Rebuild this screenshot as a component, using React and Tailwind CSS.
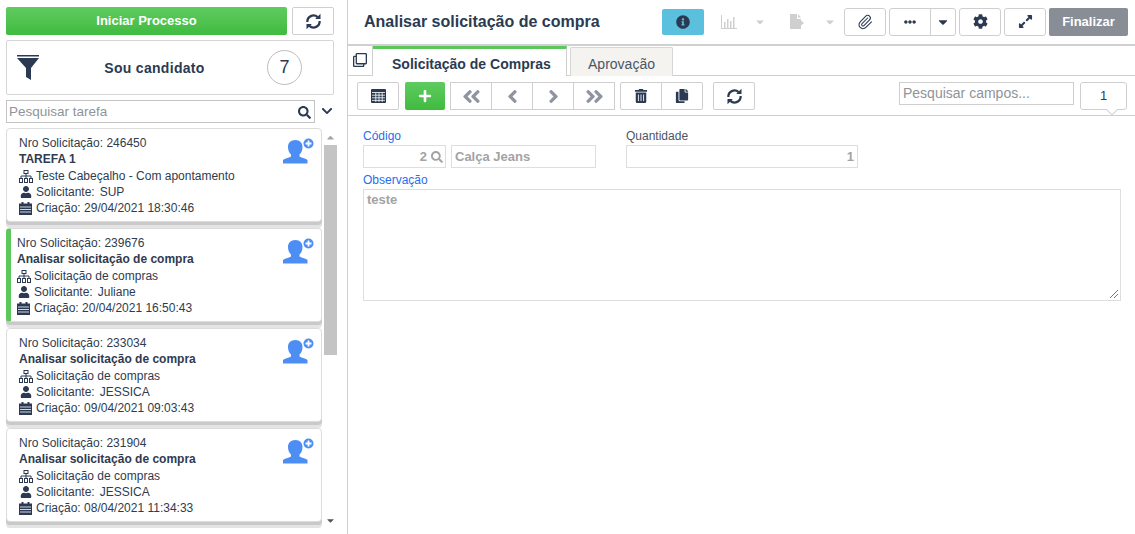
import React from "react";
import { FaSearch, FaChevronDown, FaUser, FaInfoCircle, FaEllipsisH, FaCaretDown, FaCaretUp, FaCog, FaExpandAlt, FaAngleDoubleLeft, FaAngleDoubleRight, FaAngleLeft, FaAngleRight, FaPlus, FaTrashAlt, FaCopy, FaRegClone } from "react-icons/fa";
import { Paperclip } from "lucide-react";

const ink = "#2b3a52";
const Sync = ({ s = 17 }) => (
  <svg width={s} height={s} viewBox="0 0 16 16" fill="none" stroke={ink} strokeWidth="2.1">
    <path d="M2.2 8.5a5.8 5.8 0 0 1 9.7-4.6" />
    <path d="M13.8 7.5a5.8 5.8 0 0 1-9.7 4.6" />
    <path d="M9.6 5.6h5V.8z" fill={ink} stroke="none" />
    <path d="M6.4 10.4h-5v4.8z" fill={ink} stroke="none" />
  </svg>
);
const Funnel = () => (
  <svg width="22" height="25" viewBox="0 0 22 25">
    <path d="M0 0h22v1.5H0z" fill="#2b3a52" />
    <path d="M0 3h22l-8 10v12l-5-3V13z" fill="#2b3a52" />
  </svg>
);
const Tree = () => (
  <svg width="14" height="13" viewBox="0 0 14 13" fill="none" stroke={ink} strokeWidth="1" className="shrink-0">
    <rect x="5" y="0.5" width="4" height="3" />
    <path d="M7 3.5V6M2 8V6h10v2M7 6v2" />
    <rect x="0.5" y="8.5" width="3" height="4" />
    <rect x="5.5" y="8.5" width="3" height="4" />
    <rect x="10.5" y="8.5" width="3" height="4" />
  </svg>
);
const Cal = () => (
  <svg width="13" height="13" viewBox="0 0 13 13" className="shrink-0">
    <path d="M0 1.5h13V13H0z" fill={ink} />
    <path d="M2.5 0h2v2h-2zM8.5 0h2v2h-2z" fill={ink} />
    <path d="M1 5h11M1 7.5h11M1 10h11" stroke="#fff" strokeWidth="0.8" />
  </svg>
);
const UserAdd = () => (
  <svg width="31" height="26" viewBox="0 0 31 26" className="absolute right-[7px] top-[9px]">
    <path d="M12.500 2c4.500 0 7 3 7 7 0 3-1 5.500-3 7.500v2c2.500 1.500 6.500 2 8 3.500v3.500H0V22c1.500-1.500 5.500-2 8-3.500v-2c-2-2-3-4.500-3-7.500 0-4 2.500-7 7.500-7z" fill="#4d8ef5" />
    <circle cx="25.500" cy="5.500" r="5" fill="#4d8ef5" />
    <path d="M22.500 5.500h6M25.500 2.500v6" stroke="#fff" strokeWidth="1.800" />
  </svg>
);
const Chart = () => (
  <svg width="16" height="14" viewBox="0 0 16 14" fill="#cfcfcf" className="shrink-0">
    <path d="M0 0h1v13h15v1H0z" />
    <path d="M3 7h1.500v6H3zM6 4h1.500v9H6zM9 6h1.500v7H9zM12 2h1.500v11H12z" />
  </svg>
);
const FileOut = () => (
  <svg width="14" height="15" viewBox="0 0 14 15" fill="#cfcfcf" className="shrink-0">
    <path d="M0 0h7v5h4v1.500L14 9l-3 2.500V15H0z" />
    <path d="M8 0l3 3.500H8z" />
  </svg>
);
const TableIcon = () => (
  <svg width="15" height="14" viewBox="0 0 15 14">
    <rect width="15" height="14" rx="1" fill={ink} />
    <path d="M1 3.500h13M1 6.200h13M1 8.800h13M1 11.400h13M4.800 3.500V13M8 3.500V13M11.200 3.500V13" stroke="#fff" strokeWidth="0.800" />
  </svg>
);

const cards = [
  { n: "246450", t: "TAREFA 1", p: "Teste Cabeçalho - Com apontamento", s: "SUP", c: "29/04/2021 18:30:46" },
  { n: "239676", t: "Analisar solicitação de compra", p: "Solicitação de compras", s: "Juliane", c: "20/04/2021 16:50:43", active: true },
  { n: "233034", t: "Analisar solicitação de compra", p: "Solicitação de compras", s: "JESSICA", c: "09/04/2021 09:03:43" },
  { n: "231904", t: "Analisar solicitação de compra", p: "Solicitação de compras", s: "JESSICA", c: "08/04/2021 11:34:33" },
];

function Card({ n, t, p, s, c, active }) {
  return (
    <div className={`relative h-[94px] w-[316px] shrink-0 rounded-[4px] border border-[#dcdcdc] bg-white shadow-[0_3px_0_#c9c9c9,0_6px_0_#e4e4e4] text-[12px] leading-[16px] text-[#2f3b50] pt-[6px] ${active ? "border-l-[5px] border-l-[#5cc85c] pl-[6px]" : "pl-[12px]"}`}>
      <UserAdd />
      <div>Nro Solicitação: {n}</div>
      <div className="font-bold">{t}</div>
      <div className="mt-[1px] flex items-center gap-[3px]"><Tree />{p}</div>
      <div className="flex items-center gap-[4px]"><FaUser size={12} color={ink} className="shrink-0 ml-[1px]" /><span>Solicitante:</span><span className="ml-[1px]">{s}</span></div>
      <div className="flex items-center gap-[4px]"><Cal />Criação: {c}</div>
    </div>
  );
}

const btn = "flex shrink-0 items-center justify-center h-[28px] bg-white border border-[#cfcfcf]";

export default function App() {
  return (
    <div className="flex h-[534px] w-[1135px] overflow-hidden bg-white text-[12px]" style={{ fontFamily: '"Liberation Sans", Arial, sans-serif' }}>
      <aside className="flex w-[348px] shrink-0 flex-col border-r border-[#cfcfcf] px-[6px] pt-[7px]">
        <div className="flex gap-[5px]">
          <button className="h-[28px] w-[281px] rounded-[2px] bg-gradient-to-b from-[#5fcb5f] to-[#3fbb3f] text-[13px] font-bold text-white">Iniciar Processo</button>
          <button className={`${btn} w-[42px] rounded-[2px]`}><Sync /></button>
        </div>
        <div className="mt-[5px] flex h-[55px] w-[328px] items-center rounded-[2px] border border-[#d6d6d6] pl-[10px]">
          <Funnel />
          <span className="ml-[63px] mt-[1px] w-[105px] text-center text-[14px] font-bold tracking-[0.3px] text-[#2b3a52]">Sou candidato</span>
          <span className="ml-[60px] flex h-[35px] w-[35px] items-center justify-center rounded-full border border-[#bdbdbd] text-[18px] text-[#2b3a52]">7</span>
        </div>
        <div className="mt-[5px] flex items-center">
          <div className="flex h-[23px] w-[309px] items-center justify-between border border-[#c4c4c4] pl-[2px] pr-[3px] pt-[1px] text-[13.500px] text-[#8f939a]">
            <span>Pesquisar tarefa</span>
            <FaSearch size={13} color={ink} />
          </div>
          <FaChevronDown size={12} color={ink} className="ml-[6px] mb-[2px]" />
        </div>
        <div className="relative mt-[5px] flex min-h-0 flex-1">
          <div className="flex flex-col gap-[6px]">
            {cards.map((x) => <Card key={x.n} {...x} />)}
          </div>
          <div className="ml-[2px] flex h-[398px] w-[13px] flex-col items-center">
            <FaCaretUp size={11} color="#a5a5a5" className="mt-[4px] mb-[2px]" />
            <div className="h-[210px] w-[13px] bg-[#c4c4c4]" />
            <div className="flex-1" />
            <FaCaretDown size={11} color="#555" />
          </div>
        </div>
      </aside>

      <main className="min-w-0 flex-1">
        <header className="flex h-[46px] items-center border-b-2 border-[#d0d0d0] pb-[1px]">
          <h1 className="ml-[16px] w-[298px] shrink-0 text-[16px] font-bold text-[#2b3a52]">Analisar solicitação de compra</h1>
          <div className="flex h-[26px] w-[42px] shrink-0 items-center justify-center rounded-[2px] bg-[#5bc0de]"><FaInfoCircle size={14} color={ink} /></div>
          <div className="ml-[17px] shrink-0"><Chart /></div>
          <FaCaretDown size={12} color="#cfcfcf" className="ml-[17px] shrink-0" />
          <span className="ml-[24px] shrink-0"><FileOut /></span>
          <FaCaretDown size={12} color="#cfcfcf" className="ml-[20px] shrink-0" />
          <button className={`${btn} ml-[8px] w-[42px] rounded-[3px]`}><Paperclip size={16} strokeWidth={1.6} color={ink} /></button>
          <div className={`${btn} ml-[3px] w-[67px] rounded-[3px]`}>
            <span className="flex flex-1 justify-center"><FaEllipsisH size={12} color={ink} /></span>
            <span className="flex h-full w-[25px] items-center justify-center border-l border-[#cfcfcf]"><FaCaretDown size={14} color={ink} /></span>
          </div>
          <button className={`${btn} ml-[3px] w-[42px] rounded-[3px]`}><FaCog size={15} color={ink} /></button>
          <button className={`${btn} ml-[3px] w-[42px] rounded-[3px]`}><FaExpandAlt size={15} color={ink} /></button>
          <button className="ml-[3px] h-[28px] w-[79px] shrink-0 rounded-[2px] bg-[#888d96] text-[13px] font-bold text-white">Finalizar</button>
        </header>

        <div className="flex h-[30px] border-b border-[#cfcfcf]">
          <div className="flex w-[25px] items-center justify-center border-r border-[#cfcfcf] pb-[2px]"><FaRegClone size={14} color={ink} /></div>
          <div className="h-[30px] w-[194px] border-r border-[#cfcfcf] border-t-[3px] border-t-[#5cc85c] bg-white pl-[19px] pt-[5px] text-[14px] font-bold text-[#2b3a52]">Solicitação de Compras</div>
          <div className="ml-[3px] mt-[1px] h-[29px] w-[103px] rounded-t-[2px] border border-b-0 border-[#d6d6d6] bg-[#f4f3ef] pt-[6px] text-center text-[14px] text-[#4a5568]">Aprovação</div>
        </div>

        <div className="flex h-[40px] items-start border-b border-[#cfcfcf] pl-[9px] pt-[6px]">
          <button className={`${btn} w-[42px] rounded-[2px]`}><TableIcon /></button>
          <button className="ml-[6px] flex h-[28px] w-[40px] shrink-0 items-center justify-center rounded-[2px] bg-gradient-to-b from-[#5fcb5f] to-[#3fbb3f]"><FaPlus size={14} color="#fff" /></button>
          <div className="ml-[5px] flex">
            {[FaAngleDoubleLeft, FaAngleLeft, FaAngleRight, FaAngleDoubleRight].map((I, i) => (
              <span key={i} className={`${btn} w-[42px] ${i ? "-ml-px" : ""}`}><I size={21} color="#8f95a0" /></span>
            ))}
          </div>
          <div className="ml-[5px] flex">
            <span className={`${btn} w-[42px] rounded-l-[2px]`}><FaTrashAlt size={14} color={ink} /></span>
            <span className={`${btn} -ml-px w-[42px] rounded-r-[2px]`}><FaCopy size={14} color={ink} /></span>
          </div>
          <button className={`${btn} ml-[10px] w-[42px] rounded-[2px]`}><Sync /></button>
          <div className="ml-[144px] flex h-[23px] w-[175px] shrink-0 items-center border border-[#cfcfcf] pl-[3px] text-[14px] text-[#8f939a]">Pesquisar campos...</div>
          <div className="relative ml-[6px] flex h-[28px] w-[47px] shrink-0 items-center justify-center rounded-[3px] border border-[#cfcfcf] bg-white text-[13px] text-[#2b3a52]">
            1
            <span className="absolute -bottom-[5px] right-[10px] h-[8px] w-[8px] rotate-45 border-b border-r border-[#cfcfcf] bg-white" />
          </div>
        </div>

        <section className="px-[15px] pt-[13px] text-[12px]">
          <div className="flex">
            <div>
              <div className="leading-[14px] text-[#2a6cf0]">Código</div>
              <div className="mt-[2px] flex">
                <div className="flex h-[23px] w-[83px] items-center justify-end border border-[#dedede] pr-[2px] text-[13px] font-bold text-[#a3a3a3]">2<FaSearch size={12} color="#a3a3a3" className="ml-[4px]" /></div>
                <div className="ml-[5px] flex h-[23px] w-[145px] items-center border border-[#dedede] pl-[3px] text-[13px] font-bold text-[#a3a3a3]">Calça Jeans</div>
              </div>
            </div>
            <div className="ml-[30px]">
              <div className="leading-[14px] text-[#4a5568]">Quantidade</div>
              <div className="mt-[2px] flex h-[23px] w-[232px] items-center justify-end border border-[#dedede] pr-[3px] text-[13px] font-bold text-[#a3a3a3]">1</div>
            </div>
          </div>
          <div className="mt-[5px] leading-[14px] text-[#2a6cf0]">Observação</div>
          <div className="relative mt-[2px] h-[112px] w-[758px] border border-[#dedede] pl-[3px] text-[13px] font-bold text-[#a3a3a3]">
            teste
            <svg width="10" height="10" viewBox="0 0 10 10" className="absolute bottom-[1px] right-[1px]" stroke="#777" strokeWidth="1"><path d="M9 1L1 9M9 5L5 9" /></svg>
          </div>
        </section>
      </main>
    </div>
  );
}
